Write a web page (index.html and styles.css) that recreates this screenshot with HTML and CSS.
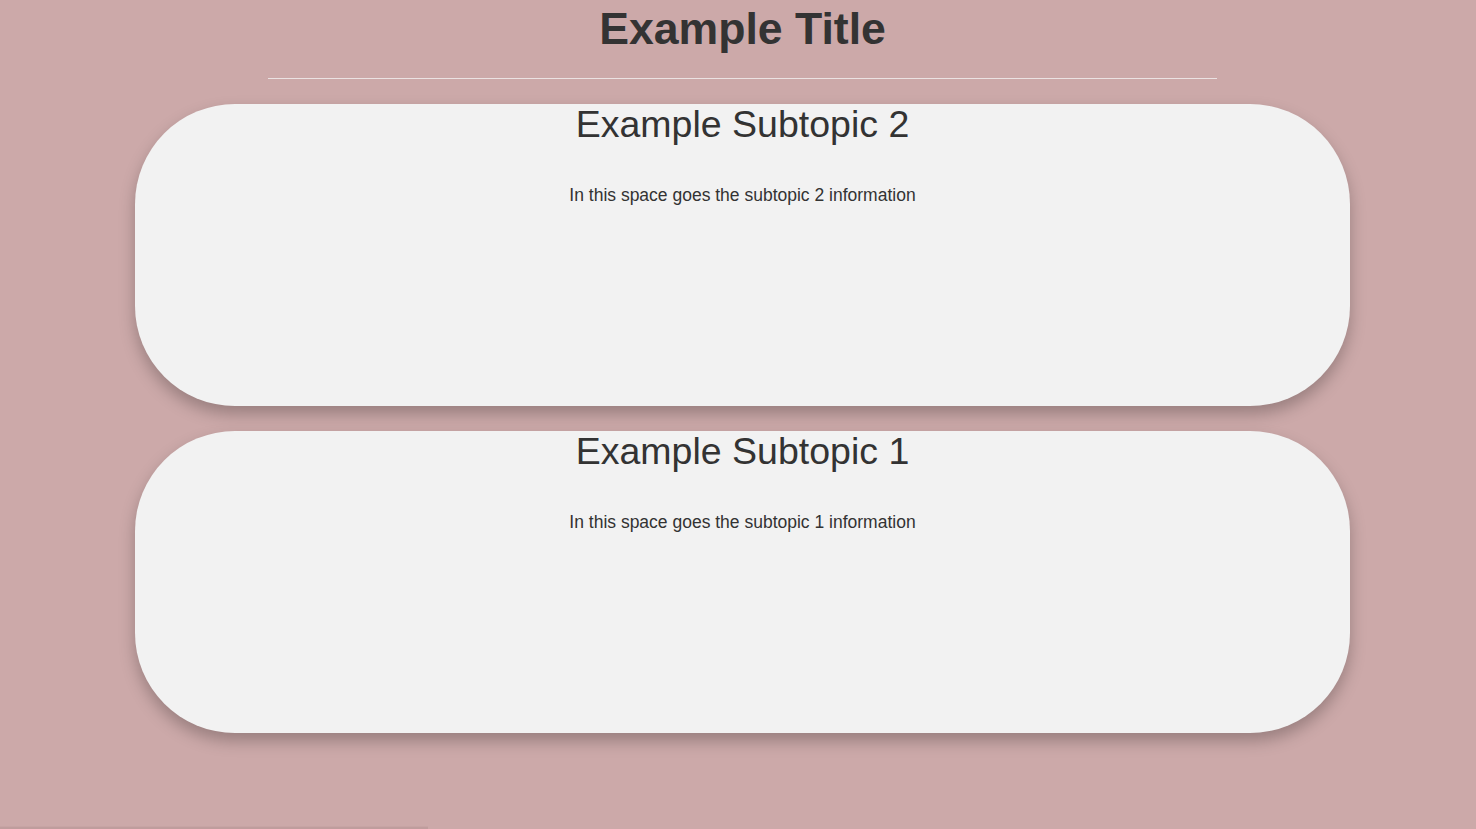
FILE: index.html
```html
<!DOCTYPE html>
<html lang="en">
<head>
<meta charset="utf-8">
<title>Example Title</title>
<link rel="stylesheet" href="styles.css">
</head>
<body>
<div class="page">
  <header class="masthead">
    <h1 class="title">Example Title</h1>
    <div class="rule"></div>
  </header>
  <main class="cards">
    <section class="card">
      <h2 class="card-title">Example Subtopic 2</h2>
      <p class="card-text">In this space goes the subtopic 2 information</p>
    </section>
    <section class="card">
      <h2 class="card-title">Example Subtopic 1</h2>
      <p class="card-text">In this space goes the subtopic 1 information</p>
    </section>
  </main>
</div>
<div class="footer-edge"></div>
</body>
</html>
```
FILE: styles.css
```css
html, body {
  margin: 0;
  padding: 0;
}
body {
  background: #cca9a9;
  color: #333333;
  font-family: "Liberation Sans", Arial, sans-serif;
  height: 829px;
  overflow: hidden;
  position: relative;
}
.page {
  padding-left: 9px;
  display: flex;
  flex-direction: column;
  align-items: center;
}
.masthead {
  display: flex;
  flex-direction: column;
  align-items: center;
  width: 100%;
}
.title {
  margin: 0;
  padding-top: 7px;
  font-size: 44.6px;
  line-height: 44px;
  font-weight: bold;
  text-align: center;
}
.rule {
  width: 949px;
  height: 1px;
  background: #ebe2e2;
  margin-top: 27px;
}
.cards {
  display: flex;
  flex-direction: column;
  gap: 25px;
  margin-top: 25px;
}
.card {
  width: 1215px;
  height: 302px;
  box-sizing: border-box;
  background: #f2f2f2;
  border-radius: 100px;
  box-shadow: 0 8px 16px rgba(0, 0, 0, 0.25);
  display: flex;
  flex-direction: column;
  align-items: center;
  padding-top: 2px;
}
.card-title {
  margin: 0;
  font-size: 37.5px;
  line-height: 37.5px;
  font-weight: normal;
}
.card-text {
  margin: 43px 0 0;
  font-size: 17.5px;
  line-height: 17.5px;
}
.footer-edge {
  position: absolute;
  left: 0;
  bottom: 0;
  width: 428px;
  height: 2px;
  background: #bf9d9d;
  border-top: 1px solid #c7a4a4;
}
```
